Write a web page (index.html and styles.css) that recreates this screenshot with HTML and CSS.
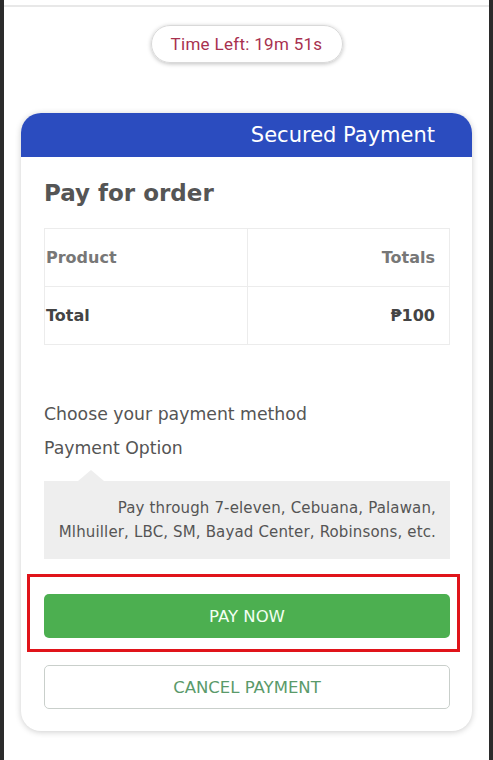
FILE: index.html
```html
<!DOCTYPE html>
<html lang="en">
<head>
<meta charset="utf-8">
<title>Pay for order</title>
<link rel="stylesheet" href="styles.css">
</head>
<body>
<div class="frame">
  <div class="topbar"></div>
  <div class="timer-wrap">
    <div class="timer">Time Left: 19m 51s</div>
  </div>
  <div class="card">
    <div class="card-head">Secured Payment</div>
    <div class="card-body">
      <h1 class="title">Pay for order</h1>
      <table class="order">
        <tr class="row-head">
          <td class="c-left">Product</td>
          <td class="c-right">Totals</td>
        </tr>
        <tr class="row-total">
          <td class="c-left">Total</td>
          <td class="c-right">₱100</td>
        </tr>
      </table>
      <p class="choose">Choose your payment method</p>
      <p class="option">Payment Option</p>
      <div class="info">
        <p>Pay through 7-eleven, Cebuana, Palawan, Mlhuiller, LBC, SM, Bayad Center, Robinsons, etc.</p>
      </div>
      <div class="highlight">
        <button class="btn btn-pay">PAY NOW</button>
      </div>
      <button class="btn btn-cancel">CANCEL PAYMENT</button>
    </div>
  </div>
</div>
</body>
</html>
```

FILE: styles.css
```css
html, body {
  margin: 0;
  padding: 0;
  background: #ffffff;
}
body {
  font-family: "DejaVu Sans", "Noto Sans", sans-serif;
  color: #555;
}
.frame {
  width: 485px;
  height: 760px;
  border-left: 4px solid #2b2b2b;
  border-right: 4px solid #2b2b2b;
  background: #fff;
  overflow: hidden;
}
.topbar {
  height: 5px;
  border-bottom: 2px solid #e8e8e8;
}
.timer-wrap {
  display: flex;
  justify-content: center;
  padding-top: 18px;
}
.timer {
  box-sizing: border-box;
  width: 192px;
  height: 38px;
  border: 1px solid #d9d9d9;
  border-radius: 19px;
  box-shadow: 0 1px 4px rgba(0,0,0,0.25);
  font-family: Roboto, sans-serif;
  font-size: 17px;
  letter-spacing: 0.3px;
  color: #a8314f;
  display: flex;
  align-items: center;
  justify-content: center;
}
.card {
  margin: 50px 17px 0;
  border-radius: 20px;
  box-shadow: 0 1px 6px rgba(0,0,0,0.2);
  overflow: hidden;
  background: #fff;
}
.card-head {
  height: 44px;
  background: #2b4cbf;
  color: #fff;
  font-size: 21px;
  text-align: right;
  padding-right: 37px;
  line-height: 44px;
}
.card-body {
  padding: 18px 22px 22px 23px;
}
.title {
  margin: 0;
  font-size: 23px;
  font-weight: 700;
  color: #555;
  line-height: 36px;
}
.order {
  margin-top: 17px;
  width: 100%;
  border-collapse: collapse;
  border: 1px solid #ececec;
  font-size: 16px;
}
.order td {
  border: 1px solid #ececec;
  height: 57px;
  padding: 0 14px 0 1px;
}
.row-head td {
  color: #777;
  font-weight: 600;
}
.row-total td {
  color: #444;
  font-weight: 700;
}
.c-left { width: 50%; }
.c-right { text-align: right; }
.choose {
  margin: 57px 0 0;
  font-size: 17.3px;
  color: #555;
  line-height: 24px;
}
.option {
  margin: 10px 0 0;
  font-size: 17.3px;
  color: #555;
  line-height: 24px;
}
.info {
  position: relative;
  margin-top: 21px;
  background: #eeeeee;
  padding: 15px 14px 15px 14px;
}
.info::before {
  content: "";
  position: absolute;
  top: -11px;
  left: 34px;
  border-left: 13px solid transparent;
  border-right: 13px solid transparent;
  border-bottom: 11px solid #eeeeee;
}
.info p {
  margin: 0;
  text-align: right;
  font-size: 15px;
  letter-spacing: 0.15px;
  line-height: 24px;
  color: #555;
}
.highlight {
  margin: 15px -10px 0 -17px;
  border: 3px solid #e0141a;
  padding: 17px 7px 11px 14px;
}
.btn {
  display: block;
  width: 100%;
  box-sizing: border-box;
  height: 44px;
  border-radius: 5px;
  font-family: "DejaVu Sans", "Noto Sans", sans-serif;
  font-size: 16.5px;
  cursor: pointer;
}
.btn-pay {
  background: #4caf50;
  border: none;
  color: #f2fff2;
}
.btn-cancel {
  margin-top: 13px;
  background: #fff;
  border: 1px solid #c9cfcb;
  color: #5a9a6a;
}
```
